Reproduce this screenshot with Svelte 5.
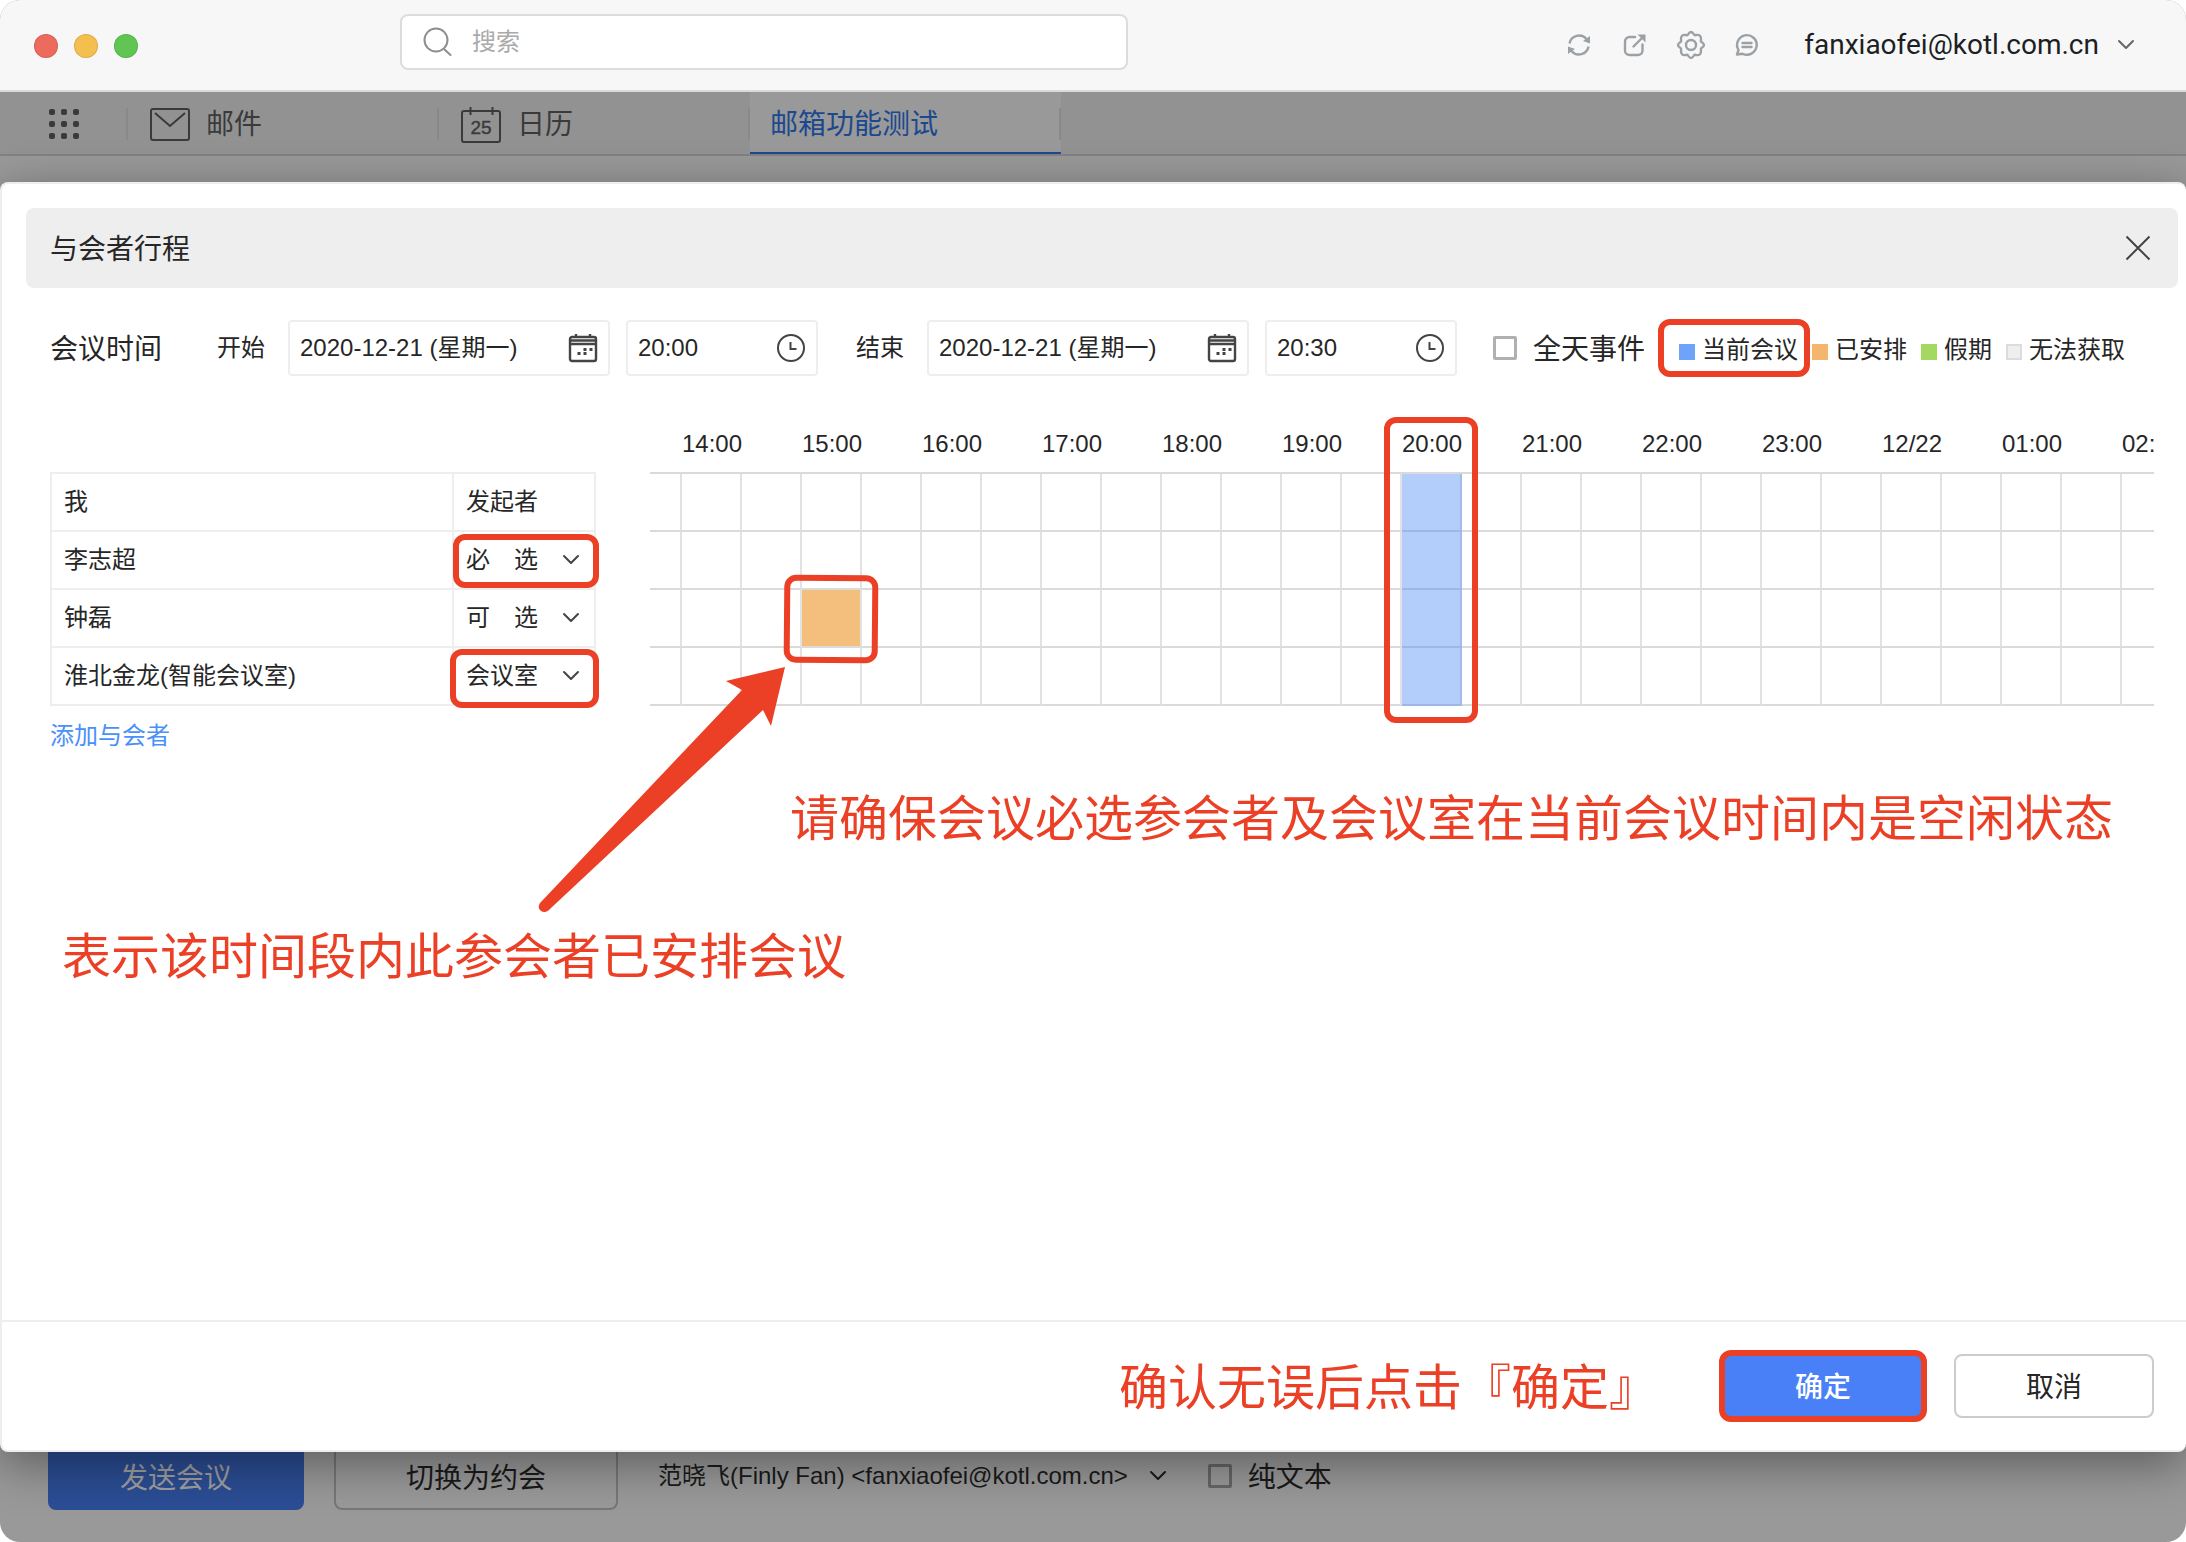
<script>
  const hours = ['14:00', '15:00', '16:00', '17:00', '18:00', '19:00', '20:00', '21:00', '22:00', '23:00', '12/22', '01:00', '02:00'];
  const slots = Array.from({ length: hours.length * 2 }, (_, i) => i);
  const attendees = [
    { name: '我', role: '发起者', fixed: true },
    { name: '李志超', role: '必　选', ring: 'snug' },
    { name: '钟磊', role: '可　选', busy: 2 },
    { name: '淮北金龙(智能会议室)', role: '会议室', ring: 'loose' }
  ];
  const roles = ['必　选', '可　选', '会议室'];
  const dots = [0, 1, 2, 3, 4, 5, 6, 7, 8];
  const times = [
    { id: 'start', label: '开始', date: '2020-12-21 (星期一)', time: '20:00' },
    { id: 'end', label: '结束', date: '2020-12-21 (星期一)', time: '20:30' }
  ];
  const legend = [
    { label: '当前会议', kind: 'current' },
    { label: '已安排', kind: 'busy' },
    { label: '假期', kind: 'holiday' },
    { label: '无法获取', kind: 'unknown' }
  ];
</script>

{#snippet chevron()}
  <svg class="chevron" width="18" height="12" viewBox="0 0 18 12" aria-hidden="true">
    <path d="M2 2l7 7 7-7" fill="none" stroke="currentColor" stroke-width="2" stroke-linecap="round" stroke-linejoin="round" />
  </svg>
{/snippet}

<div class="window">
  <header class="titlebar">
    <div class="lights">
      <button class="light red" aria-label="关闭窗口"></button>
      <button class="light yellow" aria-label="最小化"></button>
      <button class="light green" aria-label="全屏"></button>
    </div>
    <label class="search">
      <svg width="30" height="30" viewBox="0 0 30 30" fill="none" stroke="#8e8e8e" stroke-width="2" stroke-linecap="round" aria-hidden="true">
        <circle cx="13" cy="13" r="11.5" />
        <path d="M21 22l6.500 6" />
      </svg>
      <input type="text" placeholder="搜索" aria-label="搜索" />
    </label>
    <div class="tools">
      <button class="tool" aria-label="刷新">
        <svg width="28" height="28" viewBox="0 0 28 28" fill="none" stroke="#9ba1a5" stroke-width="2.4">
          <path d="M4.500 12.500A9.700 9.700 0 0 1 21.500 8M23.500 15.500A9.700 9.700 0 0 1 6.500 20" />
          <path d="M25 5v7.500l-7-2.500zM3 23v-7.500l7 2.500z" fill="#9ba1a5" stroke="none" />
        </svg>
      </button>
      <button class="tool" aria-label="新窗口打开">
        <svg width="28" height="28" viewBox="0 0 28 28" fill="none" stroke="#9ba1a5" stroke-width="2.4" stroke-linecap="round">
          <path d="M14 6H8.500a4.500 4.500 0 0 0-4.500 4.500V19.500A4.500 4.500 0 0 0 8.500 24H17a4.500 4.500 0 0 0 4.500-4.500V13.500M12.500 15.500L22 6" />
          <path d="M16.500 3.500h8v8z" fill="#9ba1a5" stroke="none" />
        </svg>
      </button>
      <button class="tool" aria-label="设置">
        <svg width="28" height="28" viewBox="0 0 28 28" fill="none" stroke="#9ba1a5" stroke-width="2.4" stroke-linejoin="round">
          <path d="M11 3.500Q14 -1.500 17 3.500Q17.500 4.500 19 4Q24.500 3 24 9Q23.500 10.500 24.500 11Q29.500 14 24.500 17Q23.500 17.500 24 19Q24.500 25 19 24Q17.500 23.500 17 24.500Q14 29.500 11 24.500Q10.500 23.500 9 24Q3.500 25 4 19Q4.500 17.500 3.500 17Q-1.500 14 3.500 11Q4.500 10.500 4 9Q3.500 3 9 4Q10.500 4.500 11 3.500Z" />
          <circle cx="14" cy="14" r="5" />
        </svg>
      </button>
      <button class="tool" aria-label="反馈">
        <svg width="28" height="28" viewBox="0 0 28 28" fill="none" stroke="#9ba1a5" stroke-width="2.4" stroke-linecap="round" stroke-linejoin="round">
          <path d="M4 23.500l1.500-4.500A9.800 9.800 0 1 1 9.500 22.700zM9.500 12h9M9.500 16h9" />
        </svg>
      </button>
    </div>
    <button class="account">fanxiaofei@kotl.com.cn{@render chevron()}</button>
  </header>

  <nav class="tabs">
    <button class="apps" aria-label="应用">
      {#each dots as d (d)}<i></i>{/each}
    </button>
    <a class="tab" href="#mail">
      <svg width="40" height="34" viewBox="0 0 40 34" fill="none" stroke="#3a3a3a" stroke-width="2" aria-hidden="true">
        <rect x="1" y="1" width="38" height="31" rx="2" /><path d="M5 5l15 13L35 5" />
      </svg>邮件</a>
    <a class="tab" href="#calendar">
      <svg width="40" height="38" viewBox="0 0 40 38" fill="none" stroke="#3a3a3a" stroke-width="2" aria-hidden="true">
        <rect x="1" y="5" width="38" height="31" rx="2" /><path d="M9.500 1v8M31.500 1v8" />
        <text x="20" y="28" text-anchor="middle" font-size="19" fill="#3a3a3a" stroke="#3a3a3a" stroke-width="0.4">25</text>
      </svg>日历</a>
    <a class="tab active" href="#test">邮箱功能测试</a>
  </nav>

  <main class="dialog" role="dialog" aria-labelledby="dialog-title">
    <div class="heading">
      <h1 id="dialog-title">与会者行程</h1>
      <button class="close" aria-label="关闭">
        <svg width="26" height="26" viewBox="0 0 26 26" fill="none" stroke="#444" stroke-width="2"><path d="M1.500 1.500l23 23M24.500 1.500l-23 23" /></svg>
      </button>
    </div>

    <div class="when">
      <span class="when-title">会议时间</span>
      {#each times as t (t.id)}
        <div class="moment">
          <label class="when-label" for={t.id}>{t.label}</label>
          <div class="field date">
            <input id={t.id} type="text" value={t.date} />
            <svg width="30" height="30" viewBox="0 0 30 30" fill="none" stroke="#444" stroke-width="2.4" aria-hidden="true">
              <rect x="2" y="4" width="26" height="24" rx="2" />
              <path d="M2 7.500h26M2 11h26M8 1v3M22 1v3" />
              <path d="M15.500 16.500h3M21.500 16.500h3M9.500 20.500h3M15.500 20.500h3" stroke-width="3" />
            </svg>
          </div>
          <div class="field time">
            <input type="text" value={t.time} aria-label="{t.label}时间" />
            <svg width="30" height="30" viewBox="0 0 30 30" fill="none" stroke="#444" stroke-width="2" aria-hidden="true">
              <circle cx="15" cy="15" r="13" /><path d="M14.500 9v7h6" />
            </svg>
          </div>
        </div>
      {/each}
      <label class="check"><input type="checkbox" /><span>全天事件</span></label>
      <ul class="legend">
        {#each legend as l (l.kind)}
          <li><i class="swatch {l.kind}"></i>{l.label}{#if l.kind === 'current'}<span class="ring ring-legend"></span>{/if}</li>
        {/each}
      </ul>
    </div>

    <div class="schedule">
      <div class="people">
        <table class="attendees">
          <tbody>
            {#each attendees as a (a.name)}
              <tr>
                <td>{a.name}</td>
                <td class="role">
                  {#if a.fixed}
                    {a.role}
                  {:else}
                    <div class="picker">
                      <select aria-label="{a.name}的角色" value={a.role}>
                        {#each roles as r (r)}<option value={r}>{r}</option>{/each}
                      </select>
                      {@render chevron()}
                      {#if a.ring}<span class="ring {a.ring}"></span>{/if}
                    </div>
                  {/if}
                </td>
              </tr>
            {/each}
          </tbody>
        </table>
        <a class="add" href="#add">添加与会者</a>
      </div>
      <div class="timeline">
        <div class="clip">
          <table class="slots">
            <colgroup><col class="lead" />{#each slots as s (s)}<col class="half" />{/each}</colgroup>
            <thead>
              <tr><th></th>{#each hours as h (h)}<th colspan="2"><span>{h}</span></th>{/each}</tr>
            </thead>
            <tbody>
              {#each attendees as a (a.name)}
                <tr><td></td>{#each slots as s (s)}<td class:taken={a.busy === s}></td>{/each}</tr>
              {/each}
            </tbody>
          </table>
        </div>
        <div class="meeting"></div>
        <span class="ring ring-busy"></span>
        <span class="ring ring-now"></span>
      </div>
    </div>

    <svg class="arrow" width="250" height="250" viewBox="0 0 250 250" aria-hidden="true">
      <path d="M247 6L188 20L204 29L2 242Q-1 247 3 250Q8 253 13 247L225 49L233 65Z" fill="#eb4025" />
    </svg>
    <p class="note note-free">请确保会议必选参会者及会议室在当前会议时间内是空闲状态</p>
    <p class="note note-busy">表示该时间段内此参会者已安排会议</p>

    <footer class="actions">
      <p class="note">确认无误后点击『确定』</p>
      <button class="btn primary">确定<span class="ring ring-ok"></span></button>
      <button class="btn">取消</button>
    </footer>
  </main>

  <div class="compose">
    <button class="send">发送会议</button>
    <button class="switch">切换为约会</button>
    <button class="sender">范晓飞(Finly Fan) &lt;fanxiaofei@kotl.com.cn&gt;{@render chevron()}</button>
    <label class="check plain"><input type="checkbox" /><span>纯文本</span></label>
  </div>
</div>

<style>
  :global(body) { margin: 0; background: #fff; }
  * { box-sizing: border-box; }
  button, input, select { font: inherit; color: inherit; background: none; border: 0; padding: 0; margin: 0; outline: 0; }
  svg { display: block; flex: none; overflow: visible; }
  a { text-decoration: none; color: inherit; }
  .window {
    display: flex; flex-direction: column; min-height: 100vh; overflow: hidden;
    background: #999; border-radius: 20px; color: #262626;
    font: 24px/36px "Liberation Sans", "Noto Sans CJK SC", sans-serif;
  }

  .titlebar { display: flex; align-items: center; height: 92px; padding: 0 51px 0 34px; background: #f7f7f7; border-bottom: 2px solid #dadada; }
  .lights { display: flex; gap: 16px; width: 366px; flex: none; padding-top: 2px; }
  .light { width: 24px; height: 24px; border-radius: 50%; border: 1px solid rgba(0, 0, 0, 0.1); }
  .red { background: #ec6a5e; }
  .yellow { background: #f4bf4f; }
  .green { background: #61c554; }
  .search { display: flex; align-items: center; gap: 19px; width: 728px; height: 56px; padding: 0 21px; margin-bottom: 6px; background: #fff; border: 2px solid #dcdcdc; border-radius: 8px; }
  .search input { flex: 1; min-width: 0; }
  .search input::placeholder { color: #aaa; opacity: 1; }
  .tools { display: flex; gap: 28px; margin-left: auto; }
  .tool { width: 28px; height: 28px; }
  .account { display: flex; align-items: center; gap: 18px; margin-left: 43px; font-family: Roboto, sans-serif; font-size: 28px; color: #1c1f24; }
  .account .chevron { color: #666; }

  .tabs { display: flex; height: 64px; background: #929292; border-bottom: 2px solid #828282; font-size: 28px; color: #3a3a3a; }
  .apps { display: grid; grid-template-columns: repeat(3, 6px); gap: 6px; align-content: center; justify-content: center; width: 128px; flex: none; padding-top: 2px; }
  .apps i { width: 6px; height: 6px; border-radius: 2px; background: #3a3a3a; }
  .tab { position: relative; display: flex; align-items: center; gap: 16px; width: 311px; padding: 3px 0 0 22px; }
  .tab::before, .active::after { content: ""; position: absolute; left: -2px; top: 16px; width: 2px; height: 32px; background: #898989; }
  .active { padding-left: 20px; background: #999; color: #1b488f; box-shadow: inset 0 -2px #1b488f; }
  .active::after { left: auto; right: 0; }

  .dialog {
    position: relative; z-index: 1; flex: 1; display: flex; flex-direction: column; margin-top: 26px;
    background: #fff; border: 2px solid #eee; border-right: 0; border-radius: 8px; box-shadow: 0 12px 48px rgba(0, 0, 0, 0.4);
  }
  .heading { display: flex; align-items: center; justify-content: space-between; height: 80px; margin: 24px 8px 0 24px; padding: 0 27px 0 24px; background: #eee; border-radius: 8px; }
  h1 { margin: 0; padding-top: 3px; font-size: 28px; font-weight: 400; }

  .when { display: flex; align-items: center; height: 56px; margin: 32px 32px 0 48px; white-space: nowrap; }
  .when-title { width: 167px; padding-top: 3px; font-size: 28px; }
  .moment { display: flex; align-items: center; margin-right: 37px; }
  .moment + .moment { margin-left: 1px; margin-right: 36px; }
  .when-label { width: 71px; }
  .field { display: flex; align-items: center; height: 56px; padding: 0 10px; border: 2px solid #eee; border-radius: 4px; }
  .field input { flex: 1; min-width: 0; }
  .date { width: 322px; margin-right: 16px; }
  .time { width: 192px; }
  .check { display: flex; align-items: center; gap: 16px; font-size: 28px; }
  .check span { padding-top: 3px; }
  .check input { appearance: none; width: 24px; height: 24px; border: 3px solid #b0b0b0; border-radius: 2px; }
  .legend { display: flex; gap: 14px; margin: 0 0 0 34px; padding: 4px 0 0; list-style: none; }
  .legend li { position: relative; display: flex; align-items: center; gap: 7px; }
  .swatch { width: 16px; height: 16px; margin-top: 4px; }
  .current { background: #6ea3fa; }
  .busy { background: #f4b66c; }
  .holiday { background: #a5d860; }
  .unknown { background: #eee; border: 2px solid #dcdcdc; }

  .schedule { display: flex; gap: 54px; margin: 40px 32px 0 48px; }
  .people { width: 546px; flex: none; padding-top: 56px; }
  table { border-collapse: collapse; table-layout: fixed; }
  .attendees { width: 100%; }
  .attendees td { height: 58px; padding: 0 12px; border: 2px solid #eee; }
  .attendees .role { width: 142px; }
  .picker { position: relative; display: flex; align-items: center; }
  .picker select { appearance: none; width: 100%; height: 36px; }
  .picker .chevron { position: absolute; right: 2px; pointer-events: none; color: #444; }
  .add { display: inline-block; margin-top: 12px; color: #4a90f9; }
  .timeline { position: relative; flex: 1; min-width: 0; }
  .clip { overflow: hidden; }
  .slots { width: 1592px; border-collapse: separate; border-spacing: 0; }
  .lead { width: 32px; }
  .half { width: 60px; }
  .slots th { height: 58px; padding: 0; border-bottom: 2px solid #dadada; font-weight: 400; text-align: left; }
  .slots th span { display: block; width: 60px; text-align: center; }
  .slots td { height: 58px; padding: 0; border-bottom: 2px solid #dadada; border-right: 2px solid #e2e2e2; }
  .slots .taken { background: #f4be7c; background-clip: padding-box; }
  .meeting { position: absolute; left: 752px; top: 58px; width: 60px; height: 232px; background: rgba(66, 133, 246, 0.4); }

  .ring { position: absolute; border: 6px solid #eb4025; border-radius: 12px; pointer-events: none; }
  .ring-legend { inset: -13px -12px -9px -21px; }
  .snug { inset: -8px -17px -10px -13px; }
  .loose { inset: -9px -17px -14px -16px; }
  .ring-busy { left: 134px; top: 159px; width: 94px; height: 88px; transform: rotate(0.500deg); }
  .ring-now { left: 734px; top: 1px; width: 94px; height: 306px; }
  .ring-ok { inset: -6px; }
  .arrow { position: absolute; left: 536px; top: 477px; }
  .note { margin: 0; color: #eb4025; font-size: 49px; line-height: 72px; white-space: nowrap; }
  .note-free { position: absolute; left: 788px; top: 599px; }
  .note-busy { position: absolute; left: 60px; top: 737px; }

  .actions { display: flex; align-items: center; justify-content: flex-end; gap: 31px; height: 130px; margin-top: auto; padding-right: 32px; border-top: 2px solid #eee; }
  .actions .note { margin-right: 34px; padding-top: 4px; }
  .btn { position: relative; width: 200px; height: 64px; padding-top: 3px; border: 2px solid #ccc; border-radius: 8px; font-size: 28px; }
  .primary { background: #4a80f7; border-color: #4a80f7; color: #fff; font-weight: 500; }

  .compose { display: flex; align-items: flex-start; height: 98px; margin-top: -8px; padding: 0 48px; white-space: nowrap; color: #1a1a1a; }
  .send, .switch { height: 66px; padding-top: 4px; border-radius: 8px; font-size: 28px; }
  .send { width: 256px; background: #2b4d94; color: #a0a0a0; }
  .switch { width: 284px; margin-left: 30px; border: 2px solid #777; }
  .sender { display: flex; align-items: center; gap: 21px; height: 64px; margin: 0 41px 0 40px; }
  .plain { height: 64px; }
  .plain input { border-color: #666; }
</style>
